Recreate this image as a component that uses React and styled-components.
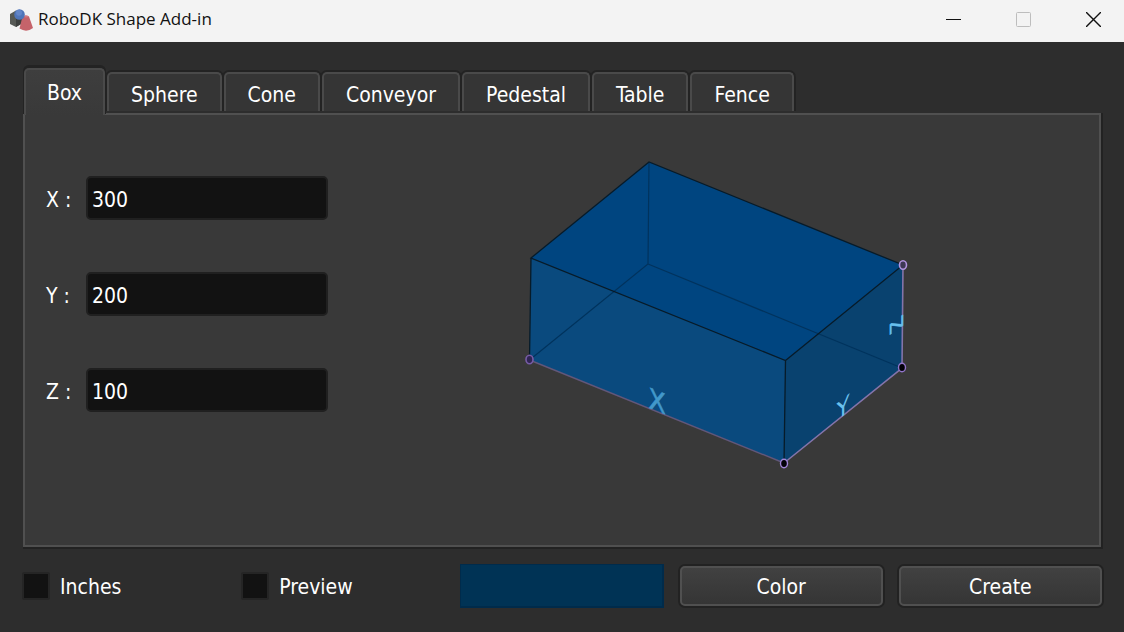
import React, { useState } from 'react'
import styled, { createGlobalStyle } from 'styled-components'

const GlobalStyle = createGlobalStyle`
  * {
    box-sizing: border-box;
  }

  body {
    margin: 0;
    background: #2d2d2d;
  }

  button, input {
    font: inherit;
    color: inherit;
  }
`;

const Window = styled.div`
  display: flex;
  flex-direction: column;
  min-height: 100vh;
  background: #2d2d2d;
  color: #ffffff;
  font-family: "DejaVu Sans Condensed", "DejaVu Sans", sans-serif;
  font-stretch: condensed;
  font-size: 21px;
  line-height: 26px;
`;

const TitleBar = styled.header`
  display: flex;
  align-items: center;
  height: 42px;
  padding: 0 8px 4px;
  background: #f3f3f3;
  color: #111111;
`;

const Title = styled.h1`
  flex: 1;
  margin: 0 0 0 4px;
  font-family: "Open Sans", "Noto Sans", sans-serif;
  font-stretch: normal;
  font-size: 17px;
  font-weight: 400;
`;

const Controls = styled.div`
  display: flex;
  gap: 24px;
`;

const ControlButton = styled.button`
  display: flex;
  align-items: center;
  justify-content: center;
  width: 46px;
  height: 36px;
  padding: 0;
  border: 0;
  background: transparent;
  color: ${props => props.disabled ? '#bdbdbd' : '#111111'};
`;

const Content = styled.main`
  flex: 1;
  display: flex;
  flex-direction: column;
  padding: 26px 23px 24px;
`;

const TabList = styled.div`
  display: flex;
  align-items: flex-end;
  gap: 2px;
  padding: 0 1px;
`;

const Tab = styled.button`
  height: ${props => props.$active ? '47px' : '39px'};
  margin-top: ${props => props.$active ? '0' : '4px'};
  margin-bottom: ${props => props.$active ? '-2px' : '2px'};
  padding: ${props => props.$active ? '0 21px' : '4px 22px 0'};
  border: 2px solid #4a4a4a;
  border-bottom: 0;
  border-radius: 5px 5px 0 0;
  background: ${props => props.$active ? 'linear-gradient(#3e3e3e, #393939)' : '#353535'};
  box-shadow: ${props => props.$active ? '0 -2px 0 1px #232323' : '0 0 0 2px #232323'};
  clip-path: inset(-3px -2px 0 -2px);
  z-index: ${props => props.$active ? 1 : 0};
`;

const Panel = styled.section`
  flex: 1;
  display: flex;
  gap: 24px;
  padding: 35px 21px;
  border: 2px solid #505050;
  background: #393939;
  box-shadow: 1px 1px 0 1px #222222;
`;

const Fields = styled.div`
  display: flex;
  flex-direction: column;
  gap: 52px;
  padding-top: 26px;
`;

const Field = styled.div`
  display: flex;
  align-items: center;
`;

const FieldLabel = styled.label`
  width: 40px;
  padding-top: 4px;
  white-space: pre;
`;

const NumberInput = styled.input`
  width: 242px;
  height: 44px;
  padding: 4px 4px 0;
  border: 2px solid #202020;
  border-radius: 5px;
  background: #121212;
  outline: 0;
`;

const Preview = styled.div`
  flex: 1;
  display: flex;
  justify-content: center;
  align-items: flex-start;
`;

const Footer = styled.footer`
  display: grid;
  grid-template-columns: repeat(5, 1fr);
  align-items: center;
  gap: 16px;
  margin: 17px -1px 0;
`;

const CheckLabel = styled.label`
  display: flex;
  align-items: center;
  gap: 10px;
`;

const CheckText = styled.span`
  padding-top: 2px;
`;

const CheckBox = styled.input`
  appearance: none;
  width: 28px;
  height: 28px;
  margin: 0;
  border: 2px solid #252525;
  border-radius: 2px;
  background: #121212;

  &:checked {
    background: #00508f;
  }
`;

const Swatch = styled.div`
  height: 44px;
  border: 1px solid #002b4b;
  border-right-width: 2px;
  border-bottom-width: 2px;
  background: ${props => props.$color};
`;

const PushButton = styled.button`
  height: 40px;
  padding: 2px 10px 0;
  border: 2px solid #505050;
  border-radius: 5px;
  background: linear-gradient(#414141, #353535);
  box-shadow: 0 0 0 2px #222222;
`;

const AxisText = styled.text`
  font-family: ${props => props.$wide ? '"DejaVu Sans"' : '"Liberation Sans Narrow", "DejaVu Sans Condensed"'}, sans-serif;
  font-stretch: ${props => props.$wide ? 'normal' : 'condensed'};
  text-anchor: middle;
`;

const tabs = ['Box', 'Sphere', 'Cone', 'Conveyor', 'Pedestal', 'Table', 'Fence']

const axes = ['X', 'Y', 'Z']

function ShapesIcon() {
    return (
        <svg width="26" height="26" viewBox="0 0 26 26" aria-hidden="true">
            <path d="M2 8 L8 4.500 L14 8 V17.500 L8 21 L2 18 Z" fill="#565955" />
            <path d="M8 11 L14 8 V17.500 L8 21 Z" fill="#3d403e" />
            <path d="M14.500 10.500 Q18 8.500 21 10.500 L25 22 Q18.500 27 11.500 22.500 Z" fill="#c5636a" />
            <path d="M14.500 10.500 Q18 8.500 21 10.500 Q18 12.500 14.500 10.500 Z" fill="#d27a80" />
            <circle cx="11.500" cy="8.500" r="5.300" fill="#4f75b9" />
            <circle cx="11" cy="6.800" r="3" fill="#6386c8" />
        </svg>
    )
}

function BoxDrawing() {
    return (
        <svg width="410" height="325" viewBox="0 0 410 325" role="img" aria-label="Box with X, Y and Z axes">
            {/* Faces */}
            <path d="M139 12 L393 115 L275.500 210.500 L21 108 Z" fill="#004580" />
            <path d="M21 108 L275.500 210.500 L274 313 L19.500 210 Z" fill="#0a4a7e" />
            <path d="M275.500 210.500 L393 115 L392 218 L274 313 Z" fill="#09426f" />

            {/* Hidden edges */}
            <path d="M139 12 L138 114 L19.500 210 M138 114 L392 218" fill="none" stroke="#00335d" strokeWidth="1.2" />

            {/* Visible edges */}
            <path d="M21 108 L139 12 L393 115 L275.500 210.500 Z M21 108 L19.500 210 M275.500 210.500 L274 313" fill="none" stroke="#071b29" strokeWidth="1.3" />

            {/* Measured edges */}
            <path d="M19.500 210 L274 313" stroke="#62577a" strokeWidth="1.4" />
            <path d="M274 313 L392 218 L393 115" fill="none" stroke="#8474aa" strokeWidth="1.6" />
            <ellipse cx="19.500" cy="209.500" rx="3.500" ry="4.200" fill="#302553" stroke="#775ca6" strokeWidth="1.6" />
            <ellipse cx="274" cy="313.500" rx="3.500" ry="4.200" fill="#020108" stroke="#a184d8" strokeWidth="1.4" />
            <ellipse cx="392" cy="217.500" rx="3.500" ry="4.200" fill="#020108" stroke="#9275cb" strokeWidth="1.4" />
            <ellipse cx="393" cy="115" rx="3.500" ry="4.200" fill="#3d3855" stroke="#b194df" strokeWidth="1.6" />

            <AxisText transform="translate(147 261) skewY(22)" fontSize="28" fill="#4298ca" stroke="#4298ca" strokeWidth="0.6">X</AxisText>
            <AxisText transform="translate(333 266) skewY(-39)" fontSize="24" fill="#68c0ed">Y</AxisText>
            <AxisText $wide transform="translate(393 170) skewY(-36) rotate(-90)" fontSize="18" fill="#68c0ed" stroke="#68c0ed" strokeWidth="0.4">Z</AxisText>
        </svg>
    )
}

function App() {

    const [active, setActive] = useState('Box')
    const [size, setSize] = useState({ X: '300', Y: '200', Z: '100' })

    return (
        <Window>
            <GlobalStyle />

            <TitleBar>
                <ShapesIcon />
                <Title>RoboDK Shape Add-in</Title>
                <Controls>
                    <ControlButton aria-label="Minimize">
                        <svg width="15" height="15" viewBox="0 0 15 15"><path d="M0 7.500 H15" stroke="currentColor" /></svg>
                    </ControlButton>
                    <ControlButton aria-label="Maximize" disabled>
                        <svg width="15" height="15" viewBox="0 0 15 15"><rect x="0.500" y="0.500" width="14" height="14" rx="1" fill="none" stroke="currentColor" /></svg>
                    </ControlButton>
                    <ControlButton aria-label="Close">
                        <svg width="15" height="15" viewBox="0 0 15 15"><path d="M0 0 L15 15 M15 0 L0 15" stroke="currentColor" strokeWidth="1.400" /></svg>
                    </ControlButton>
                </Controls>
            </TitleBar>

            <Content>
                <TabList role="tablist">
                    {tabs.map(tab => (
                        <Tab
                            key={tab}
                            role="tab"
                            aria-selected={tab === active}
                            $active={tab === active}
                            onClick={() => setActive(tab)}
                        >
                            {tab}
                        </Tab>
                    ))}
                </TabList>

                <Panel role="tabpanel">
                    <Fields>
                        {axes.map(axis => (
                            <Field key={axis}>
                                <FieldLabel htmlFor={`size-${axis}`}>{axis} :</FieldLabel>
                                <NumberInput
                                    id={`size-${axis}`}
                                    value={size[axis]}
                                    onChange={e => setSize({ ...size, [axis]: e.target.value })}
                                />
                            </Field>
                        ))}
                    </Fields>
                    <Preview>
                        <BoxDrawing />
                    </Preview>
                </Panel>

                <Footer>
                    <CheckLabel>
                        <CheckBox type="checkbox" />
                        <CheckText>Inches</CheckText>
                    </CheckLabel>
                    <CheckLabel>
                        <CheckBox type="checkbox" />
                        <CheckText>Preview</CheckText>
                    </CheckLabel>
                    <Swatch $color="#003355" />
                    <PushButton>Color</PushButton>
                    <PushButton>Create</PushButton>
                </Footer>
            </Content>
        </Window>
    )
}

export default App
